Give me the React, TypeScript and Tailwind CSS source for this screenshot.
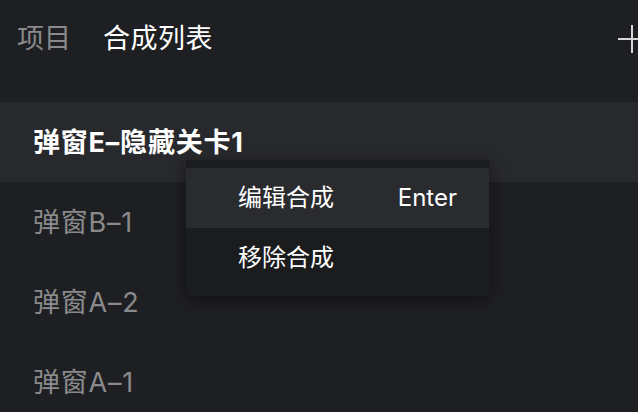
import { useState } from "react";

interface Comp {
  id: string;
  name: string;
}

const comps: Comp[] = [
  { id: "e", name: "弹窗E–隐藏关卡1" },
  { id: "b1", name: "弹窗B–1" },
  { id: "a2", name: "弹窗A–2" },
  { id: "a1", name: "弹窗A–1" },
];

const font = {
  fontFamily: '"Inter", "Noto Sans CJK SC", sans-serif',
};

const App = () => {
  const [selected] = useState("e");

  return (
    <div
      className="relative w-[638px] h-[412px] overflow-hidden bg-[#1e1f22] text-white"
      style={font}
    >
      {/* header */}
      <div className="flex items-center h-[77px] pl-[17px]">
        <span className="text-[27px] leading-none text-[#8a8a8c]">项目</span>
        <span className="ml-[32px] text-[27px] leading-none tracking-[0.5px] text-white">合成列表</span>
        <svg
          className="ml-auto -mr-[8px] shrink-0"
          width="28"
          height="28"
          viewBox="0 0 28 28"
        >
          <path d="M14 0V28M0 14H28" stroke="#d6d6d6" strokeWidth="2" />
        </svg>
      </div>

      {/* list */}
      <div className="mt-[25px] flex flex-col">
        {comps.map((c) => (
          <div
            key={c.id}
            className={`flex items-center h-[80px] pl-[33px] text-[27px] leading-none tracking-[0.8px] ${
              selected === c.id
                ? "bg-[#28292c] text-white font-bold"
                : "text-[#8a8a8c]"
            }`}
          >
            {c.name}
          </div>
        ))}
      </div>

      {/* context menu */}
      <div className="absolute left-[186px] top-[160px] w-[303px] py-[8px] bg-[#1b1c1e] shadow-[0_4px_16px_rgba(0,0,0,0.45)]">
        <div className="flex items-center justify-between h-[60px] pl-[52px] pr-[32px] bg-[#2a2b2e] text-[24px] leading-none text-white">
          <span>编辑合成</span>
          <span>Enter</span>
        </div>
        <div className="flex items-center h-[60px] pl-[52px] pr-[32px] text-[24px] leading-none text-white">
          <span>移除合成</span>
        </div>
      </div>
    </div>
  );
};

export default App;
